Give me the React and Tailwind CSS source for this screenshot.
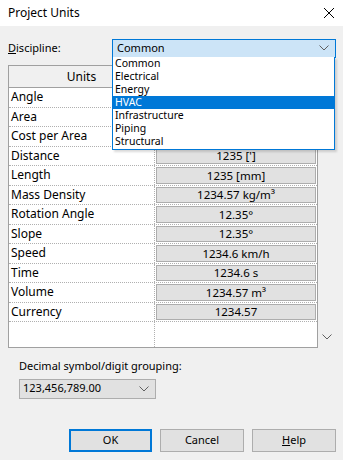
import React from "react";

const units = [
  ["Angle", "12.35°"],
  ["Area", "1234.57 m²"],
  ["Cost per Area", "1234.57 [m⁻²]"],
  ["Distance", "1235 [']"],
  ["Length", "1235 [mm]"],
  ["Mass Density", "1234.57 kg/m³"],
  ["Rotation Angle", "12.35°"],
  ["Slope", "12.35°"],
  ["Speed", "1234.6 km/h"],
  ["Time", "1234.6 s"],
  ["Volume", "1234.57 m³"],
  ["Currency", "1234.57"],
];

const disciplines = [
  "Common",
  "Electrical",
  "Energy",
  "HVAC",
  "Infrastructure",
  "Piping",
  "Structural",
];

const Chevron = ({ className }) => (
  <svg width="10" height="6" viewBox="0 0 10 6" className={className}>
    <path d="M0.5 0.5 L5 5 L9.5 0.5" fill="none" stroke="currentColor" strokeWidth="1" />
  </svg>
);

export default function App() {
  return (
    <div
      className="w-[343px] h-[460px] bg-[#f0f0f0] text-[12px] text-black relative overflow-hidden"
      style={{ fontFamily: '"Noto Sans", "Open Sans", sans-serif' }}
    >
      <div className="h-[26px] bg-white flex items-center justify-between pl-[8px] pr-[8px]">
        <div className="text-[12px]">Project Units</div>
        <svg width="12" height="12" viewBox="0 0 12 12">
          <path d="M1 1 L11 11 M11 1 L1 11" stroke="#000" strokeWidth="1" />
        </svg>
      </div>

      <div className="flex items-center mt-[13px] pl-[8px] pr-[7px] h-[18px]">
        <div className="w-[104px] text-[11px]">
          <span className="underline">D</span>iscipline:
        </div>
        <div className="flex-1 h-[19px] bg-[#cce4f7] border border-[#0078d7] flex items-center justify-between pl-[4px] pr-[6px] text-[11px]">
          <span>Common</span>
          <Chevron className="text-[#606060]" />
        </div>
      </div>

      <div className="flex mt-[8px] ml-[8px] mr-[8px] h-[283px]">
        <div className="flex-1 border border-[#a0a0a0] bg-white flex flex-col">
          <div className="flex h-[22px] border-b border-[#a0a0a0]">
            <div className="w-[146px] flex items-center justify-center bg-[#f0f0f0] border-r border-[#a0a0a0]">
              Units
            </div>
            <div className="flex-1 bg-[#f0f0f0]" />
          </div>
          {units.map(([name, value]) => (
            <div key={name} className="flex h-[19.5px] border-b border-dotted border-[#b0b0b0]">
              <div className="w-[146px] pl-[2px] flex items-center border-r border-dotted border-[#b0b0b0] text-[12px]">
                {name}
              </div>
              <div className="flex-1 p-[1px]">
                <div className="h-full bg-[#e1e1e1] border border-[#adadad] flex items-center justify-center text-[11.5px]">
                  {value}
                </div>
              </div>
            </div>
          ))}
          <div className="flex flex-1">
            <div className="w-[146px] border-r border-dotted border-[#b0b0b0]" />
            <div className="flex-1" />
          </div>
        </div>
        <div className="w-[17px] flex flex-col justify-end items-center pb-[8px]">
          <Chevron className="text-[#606060]" />
        </div>
      </div>

      <div className="ml-[19px] mt-[10px] text-[11px]">
        Decimal symbol/digit <span className="underline">g</span>rouping:
      </div>
      <div className="ml-[19px] mt-[4px] w-[137px] h-[20px] bg-[#e1e1e1] border border-[#adadad] flex items-center justify-between pl-[3px] pr-[6px] text-[11px]">
        <span>123,456,789.00</span>
        <Chevron className="text-[#606060]" />
      </div>

      <div className="flex justify-end gap-[8px] mt-[30px] pr-[7px]">
        <button className="w-[83px] h-[23px] bg-[#e1e1e1] border-2 border-[#0078d7] text-[11px]">OK</button>
        <button className="w-[84px] h-[23px] bg-[#e1e1e1] border border-[#adadad] text-[11px]">Cancel</button>
        <button className="w-[84px] h-[23px] bg-[#e1e1e1] border border-[#adadad] text-[11px]">
          <span className="underline">H</span>elp
        </button>
      </div>

      <div className="absolute left-[112px] top-[57px] w-[223px] bg-white border border-[#0078d7] border-t-0 shadow-[2px_2px_2px_rgba(0,0,0,0.15)] text-[10.5px] pb-[1px]">
        {disciplines.map((d) => (
          <div
            key={d}
            className={
              d === "HVAC"
                ? "h-[13px] leading-[13px] pl-[2px] bg-[#0078d7] text-white"
                : "h-[13px] leading-[13px] pl-[2px]"
            }
          >
            {d}
          </div>
        ))}
      </div>
    </div>
  );
}
